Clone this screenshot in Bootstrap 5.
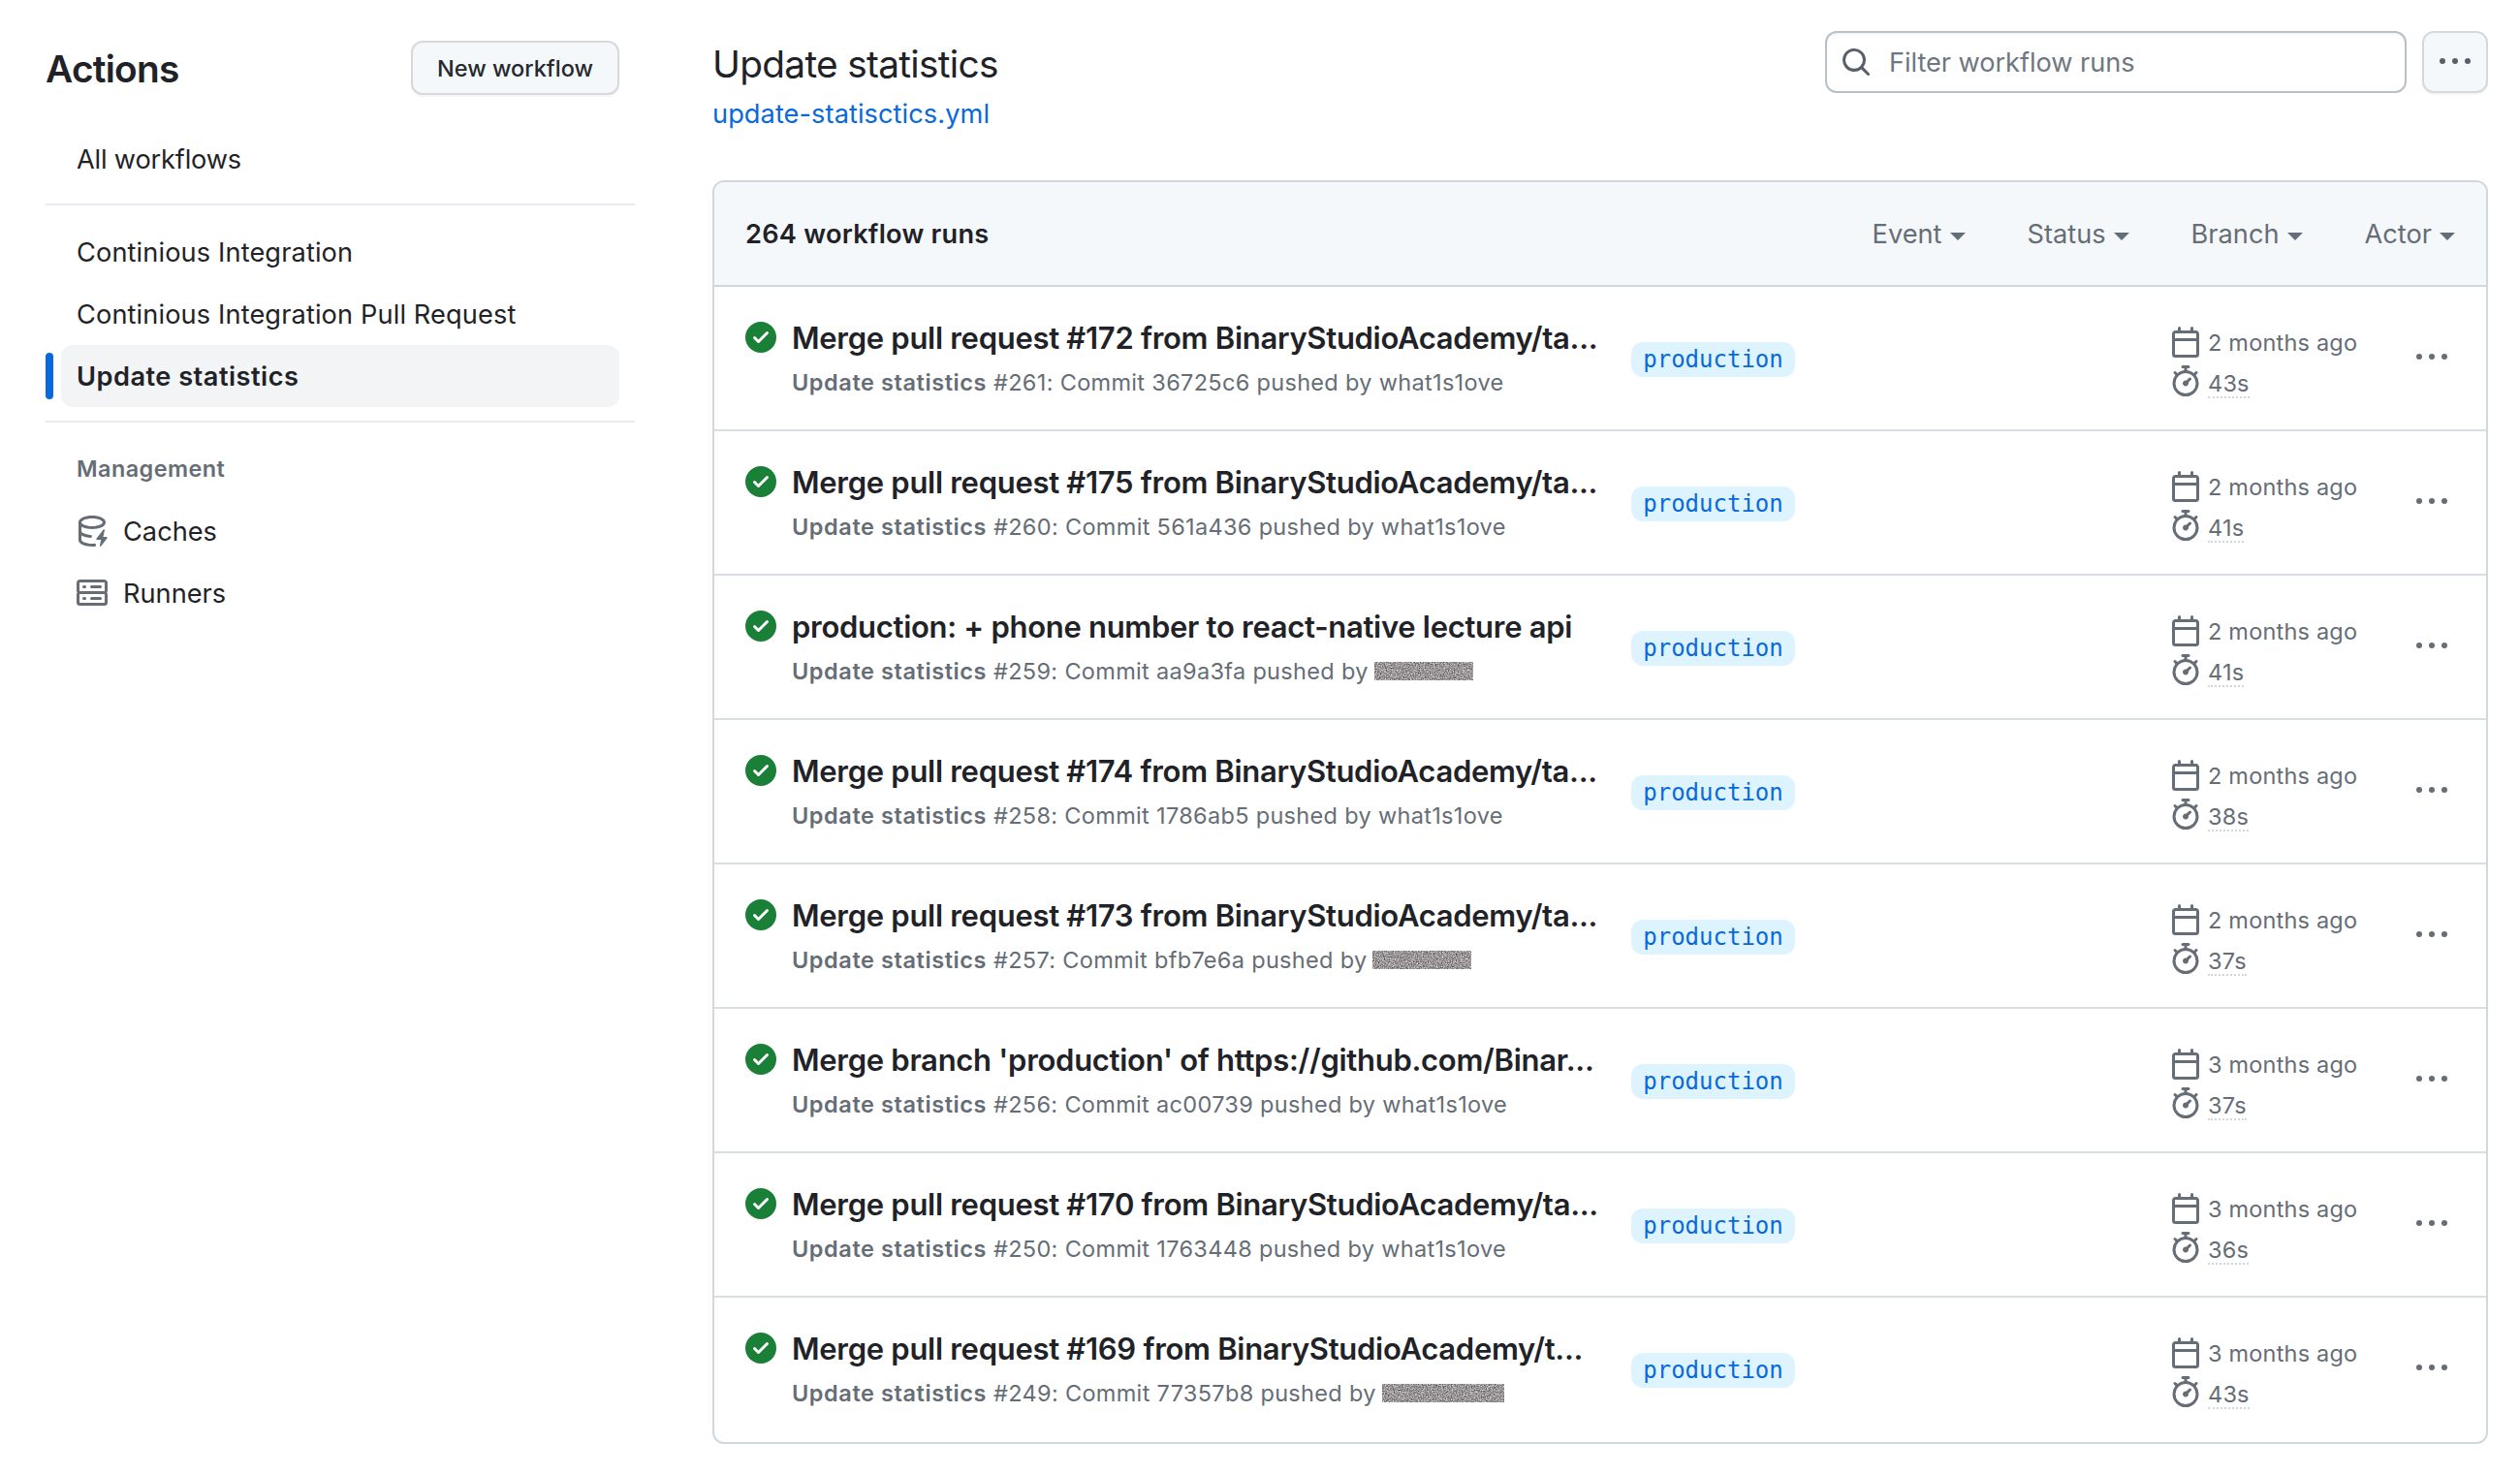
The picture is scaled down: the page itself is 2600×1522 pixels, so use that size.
<!DOCTYPE html>
<html lang="en">
<head>
<meta charset="utf-8">
<title>Update statistics · Workflow runs</title>
<link href="https://cdn.jsdelivr.net/npm/bootstrap@5.3.0/dist/css/bootstrap.min.css" rel="stylesheet">
<style>
body{font-family:Inter,"Liberation Sans",sans-serif;font-size:27.2px;line-height:40px;color:#1f2328;background:#fff;width:2600px;height:1522px;overflow:hidden}
svg{fill:currentColor;display:block;flex:none}
.ico{width:32px;height:32px}
.ico-success{color:#1a7f37}
.side{width:735px;padding:42px 80px 0 47px}
.side-head{height:56px;width:592px}
.side-title{font-size:38.8px;font-weight:600;line-height:57px;letter-spacing:-.75px}
.side-nav{padding-top:34px;letter-spacing:.12px}
.btn-gh{background:#f5f8fb;border:2px solid #d5d9dd;border-radius:12px;box-shadow:0 2px 0 rgba(31,35,40,.04);color:#25292e}
.btn-new{width:215px;height:56px;font-size:23.5px;font-weight:500;line-height:54px}
.wf-item{height:64px;line-height:66px;margin-left:16px;width:576px;padding:0 16px;border-radius:12px;white-space:nowrap}
.wf-item span{padding-top:1px;letter-spacing:0}
.wf-all{letter-spacing:-.18px}
.wf-item.current{background:#f3f4f6;font-weight:600;position:relative;letter-spacing:.48px}
.wf-item.current::before{content:"";position:absolute;left:-16px;top:8px;width:8px;height:48px;border-radius:4px;background:#0969da}
.rule{height:2px;background:#e8ecf0;width:608px;margin:14px 0 16px}
.group-title{height:64px;line-height:64px;padding-left:32px;font-size:23.4px;font-weight:600;color:#656d76;letter-spacing:.45px}
.fg-muted{color:#656d76}
.main{width:1832px;padding-top:32px}
.main-head{height:154px}
.main-titles{padding-top:10px}
.main-title{font-size:38.8px;line-height:48px;font-weight:400;letter-spacing:-.69px}
.main-link{color:#0969da;line-height:40px;margin-top:8px;letter-spacing:.07px}
.search{width:600px;height:64px;border:2px solid #b9c0c7;border-radius:12px;box-shadow:inset 0 2px 0 rgba(208,215,222,.2);padding-left:14px;gap:18px;color:#6e7781}
.search span{padding-top:1px;letter-spacing:-.06px}
.search .ico{color:#57606a}
.btn-more{width:68px;height:64px;color:#57606a}
.runs{border:2px solid #d0d7de;border-radius:12px}
.runs-head{height:106px;background:#f5f8fb;border-radius:10px 10px 0 0;padding:1px 32px 0 32px}
.runs-count{font-weight:600;letter-spacing:.24px}
.filters{gap:64px}
.filter{gap:8px;color:#656d76}
.filter::after{content:"";border:8px solid transparent;border-top-color:#656d76;border-bottom:0;margin-top:5px}
.run{height:149px;border-top:2px solid #d8dee4;padding:36px 40px 0 32px}
.run:first-child{border-top-color:#d0d7de}
.run:last-child{height:151px}
.run-main{width:882px;padding-left:16px;white-space:nowrap}
.run-title{font-size:31px;font-weight:600;line-height:44px;margin-top:-5px;letter-spacing:-.29px}
.run-sub{font-size:23.5px;line-height:36px;color:#656d76;margin-top:6px;letter-spacing:.32px}
.run-sub b{font-weight:600;letter-spacing:.58px}
.tag{margin-top:21px;height:36px;width:169px;border-radius:12px;background:#ddf4ff;color:#0969da;font:24px/36px "DejaVu Sans Mono",monospace;text-align:center}
.meta{width:254px;padding-top:5px;gap:8px;color:#656d76;font-size:23.5px;letter-spacing:.2px}
.meta-line{height:32px;gap:7px;line-height:34px}
.dur{border-bottom:2px dotted #d0d7de;line-height:27px;height:29px;margin-top:5px}
.run-menu{margin-top:21px}
.noise{display:inline-block;vertical-align:-1px;margin-left:-1px}
</style>
</head>
<body>
<svg width="0" height="0" class="position-absolute">
<filter id="grain" x="0" y="0" width="100%" height="100%" color-interpolation-filters="sRGB"><feTurbulence type="fractalNoise" baseFrequency=".8" numOctaves="2" seed="4"/><feColorMatrix values=".95 0 0 0 .125  .95 0 0 0 .11  .95 0 0 0 .115  0 0 0 0 1"/></filter>
<symbol id="i-check" viewBox="0 0 16 16"><path d="M8 16A8 8 0 1 1 8 0a8 8 0 0 1 0 16Zm3.78-9.72a.751.751 0 0 0-.018-1.042.751.751 0 0 0-1.042-.018L6.75 9.19 5.28 7.72a.751.751 0 0 0-1.042.018.751.751 0 0 0-.018 1.042l2 2a.75.75 0 0 0 1.06 0Z"/></symbol>
<symbol id="i-cal" viewBox="0 0 16 16"><path d="M4.75 0a.75.75 0 0 1 .75.75V2h5V.75a.75.75 0 0 1 1.5 0V2h1.25c.966 0 1.75.784 1.75 1.75v10.5A1.75 1.75 0 0 1 13.25 16H2.75A1.75 1.75 0 0 1 1 14.25V3.75C1 2.784 1.784 2 2.75 2H4V.75A.75.75 0 0 1 4.75 0ZM2.5 7.5v6.75c0 .138.112.25.25.25h10.5a.25.25 0 0 0 .25-.25V7.5Zm10.75-4H2.75a.25.25 0 0 0-.25.25V6h11V3.75a.25.25 0 0 0-.25-.25Z"/></symbol>
<symbol id="i-watch" viewBox="0 0 16 16"><path d="M5.75.75A.75.75 0 0 1 6.5 0h3a.75.75 0 0 1 0 1.5h-.75v1l-.001.041a6.724 6.724 0 0 1 3.464 1.435l.007-.006.75-.75a.749.749 0 0 1 1.275.326.749.749 0 0 1-.215.734l-.75.75-.006.007a6.75 6.75 0 1 1-10.548 0L2.72 5.03l-.75-.75a.751.751 0 0 1 .018-1.042.751.751 0 0 1 1.042-.018l.75.75.007.006A6.72 6.72 0 0 1 7.25 2.541V1.5H6.5a.75.75 0 0 1-.75-.75ZM8 14.5a5.25 5.25 0 1 0-.001-10.501A5.25 5.25 0 0 0 8 14.5Zm.389-6.7 1.33-1.33a.75.75 0 1 1 1.061 1.06L9.45 8.861A1.503 1.503 0 0 1 8 10.75a1.499 1.499 0 1 1 .389-2.95Z"/></symbol>
<symbol id="i-dots" viewBox="0 0 16 16"><circle cx="1.5" cy="7.5" r="1.5"/><circle cx="8" cy="7.5" r="1.5"/><circle cx="14.5" cy="7.5" r="1.5"/></symbol>
<symbol id="i-search" viewBox="0 0 16 16"><path d="M10.68 11.74a6 6 0 0 1-7.922-8.982 6 6 0 0 1 8.982 7.922l3.04 3.04a.749.749 0 0 1-.326 1.275.749.749 0 0 1-.734-.215ZM11.5 7a4.499 4.499 0 1 0-8.997 0A4.499 4.499 0 0 0 11.5 7Z"/></symbol>
<symbol id="i-server" viewBox="0 0 16 16"><path d="M1.75 1h12.5c.966 0 1.75.784 1.75 1.75v4c0 .372-.116.717-.314 1 .198.283.314.628.314 1v4a1.75 1.75 0 0 1-1.75 1.75H1.75A1.75 1.75 0 0 1 0 12.75v-4c0-.358.109-.707.314-1a1.739 1.739 0 0 1-.314-1v-4C0 1.784.784 1 1.75 1ZM1.5 2.75v4c0 .138.112.25.25.25h12.5a.25.25 0 0 0 .25-.25v-4a.25.25 0 0 0-.25-.25H1.75a.25.25 0 0 0-.25.25Zm.25 5.75a.25.25 0 0 0-.25.25v4c0 .138.112.25.25.25h12.5a.25.25 0 0 0 .25-.25v-4a.25.25 0 0 0-.25-.25ZM7 4.75A.75.75 0 0 1 7.75 4h4.5a.75.75 0 0 1 0 1.5h-4.5A.75.75 0 0 1 7 4.75ZM7.75 10h4.5a.75.75 0 0 1 0 1.5h-4.5a.75.75 0 0 1 0-1.5ZM3 4.75A.75.75 0 0 1 3.75 4h.5a.75.75 0 0 1 0 1.5h-.5A.75.75 0 0 1 3 4.75ZM3.75 10h.5a.75.75 0 0 1 0 1.5h-.5a.75.75 0 0 1 0-1.5Z"/></symbol>
<symbol id="i-cache" viewBox="0 0 16 16"><path d="M2.5 5.724V8c0 .248.238.7 1.169 1.159.874.43 2.144.745 3.62.822a.75.75 0 1 1-.078 1.498c-1.622-.085-3.102-.432-4.204-.975a5.565 5.565 0 0 1-.507-.28V12.5c0 .133.058.318.282.551.227.237.591.483 1.101.707 1.015.447 2.47.742 4.117.742.406 0 .802-.018 1.183-.052a.751.751 0 1 1 .134 1.494C8.89 15.98 8.45 16 8 16c-1.805 0-3.475-.32-4.721-.869-.623-.274-1.173-.619-1.579-1.041-.408-.425-.7-.964-.7-1.59v-9c0-.626.292-1.165.7-1.591.406-.42.956-.766 1.579-1.04C4.525.32 6.195 0 8 0c1.806 0 3.476.32 4.721.869.623.274 1.173.619 1.579 1.041.408.425.7.964.7 1.59 0 .626-.292 1.165-.7 1.591-.406.42-.956.766-1.578 1.04C11.475 6.68 9.805 7 8 7c-1.805 0-3.475-.32-4.721-.869a6.15 6.15 0 0 1-.779-.407Zm0-2.224c0 .133.058.318.282.551.227.237.591.483 1.101.707C4.898 5.205 6.353 5.5 8 5.5c1.646 0 3.101-.295 4.118-.742.508-.224.873-.471 1.1-.708.224-.232.282-.417.282-.55 0-.133-.058-.318-.282-.551-.227-.237-.591-.483-1.101-.707C11.102 1.795 9.647 1.5 8 1.5c-1.646 0-3.101.295-4.118.742-.508.224-.873.471-1.1.708-.224.232-.282.417-.282.55Z"/><path d="M14.49 7.582a.375.375 0 0 0-.66-.313l-3.625 4.625a.375.375 0 0 0 .295.606h2.127l-.619 2.922a.375.375 0 0 0 .666.304l3.125-4.125A.375.375 0 0 0 15.5 11h-1.778l.769-3.418Z"/></symbol>
</svg>
<div class="d-flex">
<aside class="side flex-shrink-0">
  <div class="side-head d-flex justify-content-between">
    <h2 class="side-title m-0">Actions</h2>
    <button class="btn btn-gh btn-new p-0">New workflow</button>
  </div>
  <nav class="side-nav d-block">
    <div class="wf-item wf-all">All workflows</div>
    <div class="rule"></div>
    <div class="wf-item">Continious Integration</div>
    <div class="wf-item">Continious Integration Pull Request</div>
    <div class="wf-item current">Update statistics</div>
    <div class="rule"></div>
    <div class="group-title">Management</div>
    <div class="wf-item d-flex align-items-center gap-3"><svg class="ico fg-muted"><use href="#i-cache"/></svg><span>Caches</span></div>
    <div class="wf-item d-flex align-items-center gap-3"><svg class="ico fg-muted"><use href="#i-server"/></svg><span>Runners</span></div>
  </nav>
</aside>
<main class="main">
  <div class="main-head d-flex justify-content-between align-items-start">
    <div class="main-titles">
      <h1 class="main-title mb-0">Update statistics</h1>
      <div class="main-link">update-statisctics.yml</div>
    </div>
    <div class="d-flex gap-3">
      <div class="search d-flex align-items-center"><svg class="ico"><use href="#i-search"/></svg><span>Filter workflow runs</span></div>
      <button class="btn btn-gh btn-more p-0 d-flex align-items-center justify-content-center"><svg class="ico"><use href="#i-dots"/></svg></button>
    </div>
  </div>
  <section class="runs">
    <div class="runs-head d-flex align-items-center justify-content-between">
      <div class="runs-count">264 workflow runs</div>
      <div class="filters d-flex">
        <div class="filter d-flex align-items-center">Event</div>
        <div class="filter d-flex align-items-center">Status</div>
        <div class="filter d-flex align-items-center">Branch</div>
        <div class="filter d-flex align-items-center">Actor</div>
      </div>
    </div>
    <div id="rows"></div>
  </section>
</main>
</div>
<script src="https://cdn.jsdelivr.net/npm/bootstrap@5.3.0/dist/js/bootstrap.bundle.min.js"></script>
<script>
// title, run number, commit, author (a number is the width of a masked name), months, duration
const runs = [
 ["Merge pull request #172 from BinaryStudioAcademy/ta...","261","36725c6","what1s1ove","2","43s"],
 ["Merge pull request #175 from BinaryStudioAcademy/ta...","260","561a436","what1s1ove","2","41s"],
 ["production: + phone number to react-native lecture api","259","aa9a3fa",102,"2","41s"],
 ["Merge pull request #174 from BinaryStudioAcademy/ta...","258","1786ab5","what1s1ove","2","38s"],
 ["Merge pull request #173 from BinaryStudioAcademy/ta...","257","bfb7e6a",102,"2","37s"],
 ["Merge branch 'production' of https://github.com/Binar...","256","ac00739","what1s1ove","3","37s"],
 ["Merge pull request #170 from BinaryStudioAcademy/ta...","250","1763448","what1s1ove","3","36s"],
 ["Merge pull request #169 from BinaryStudioAcademy/t...","249","77357b8",126,"3","43s"]
];
const icon = (n, c = "") => `<svg class="ico ${c}"><use href="#i-${n}"/></svg>`;
document.getElementById("rows").innerHTML = runs.map(([t, n, sha, who, m, d]) => `
<div class="run d-flex">
  ${icon("check", "ico-success")}
  <div class="run-main"><div class="run-title">${t}</div>
  <div class="run-sub"><b>Update statistics</b> #${n}: Commit ${sha} pushed by ${typeof who === "number" ? `<svg class="noise" width="${who}" height="19"><rect width="${who}" height="19" filter="url(#grain)"/></svg>` : who}</div></div>
  <div class="tag">production</div>
  <div class="meta ms-auto d-flex flex-column">
    <div class="meta-line d-flex">${icon("cal")}<span>${m} months ago</span></div>
    <div class="meta-line d-flex">${icon("watch")}<span class="dur">${d}</span></div>
  </div>
  ${icon("dots", "fg-muted run-menu")}
</div>`).join("");
</script>
</body>
</html>
